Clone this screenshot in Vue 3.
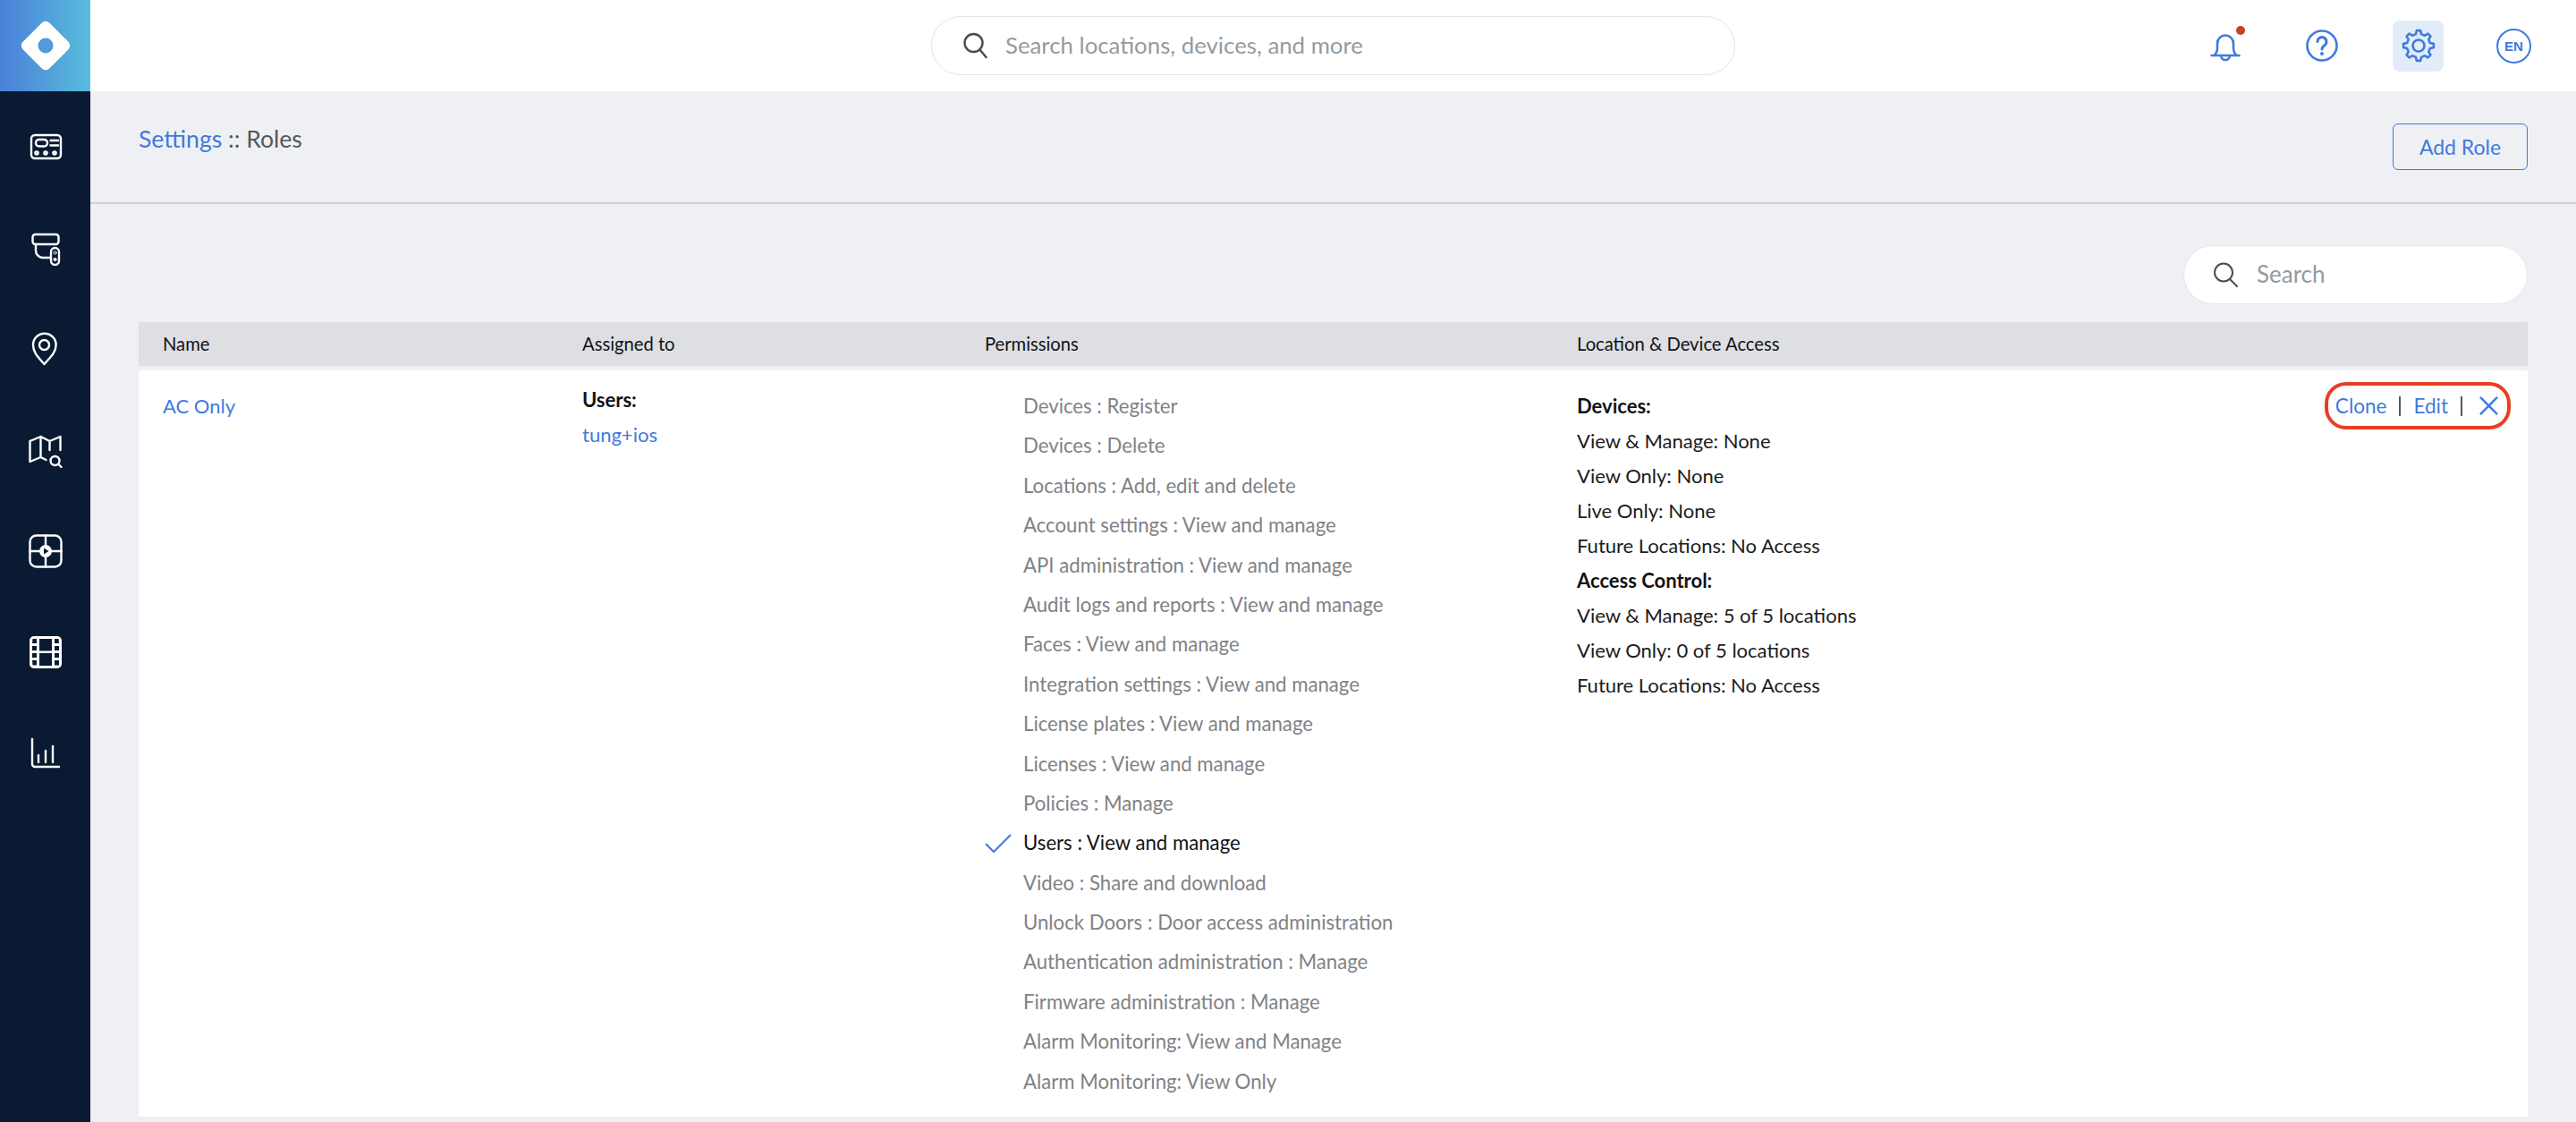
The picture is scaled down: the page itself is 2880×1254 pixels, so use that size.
<template>
  <div class="app">
    <aside class="sidebar">
      <div class="logo">
        <svg width="60" height="60" viewBox="0 0 60 60">
          <rect x="9" y="9" width="42" height="42" rx="6" fill="#fff" transform="rotate(45 30 30)" />
          <circle cx="30" cy="30" r="8.5" fill="#4f9bdc" />
        </svg>
      </div>
      <nav class="nav">
        <a class="nav-item">
          <svg class="nav-icon" viewBox="0 0 40 40">
            <rect x="4" y="7" width="33" height="26" rx="4" />
            <rect x="9" y="12" width="13" height="7.5" rx="3.5" />
            <path d="M25.5 13H34M25.5 18.5H34" />
            <circle cx="10" cy="27" r="1.6" />
            <circle cx="20" cy="27" r="1.6" />
            <circle cx="30" cy="27" r="1.6" />
          </svg>
        </a>
        <a class="nav-item">
          <svg class="nav-icon" viewBox="0 0 40 40">
            <rect x="5.500" y="5" width="29" height="11" rx="3" />
            <path d="M9 16v7a8 8 0 0 0 8 8h8" />
            <rect x="26" y="20" width="9" height="19" rx="4.500" fill="#0a1a33" />
            <circle cx="30.500" cy="25.500" r="1.600" stroke-width="1" />
            <circle cx="30.500" cy="33" r="1.600" fill="#fff" stroke-width="1" />
          </svg>
        </a>
        <a class="nav-item">
          <svg class="nav-icon" viewBox="0 0 40 40">
            <path d="M18.500 37C12 29.500 6 24 6 15.500a12.800 12.800 0 0 1 25.600 0C31.600 24 25 29.500 18.500 37z" />
            <circle cx="18.500" cy="15.500" r="5.500" />
          </svg>
        </a>
        <a class="nav-item">
          <svg class="nav-icon" viewBox="0 0 40 40">
            <path d="M2.500 10L14.500 5l10 5 12-5v15M2.500 10v23l12-5 6 3M14.500 5v23M24.500 10v10" />
            <circle cx="30.500" cy="32" r="5" />
            <path d="M34.500 36l3 3" />
          </svg>
        </a>
        <a class="nav-item">
          <svg class="nav-icon" viewBox="0 0 40 40">
            <rect x="2.500" y="2.500" width="35" height="35" rx="7" />
            <path d="M20 2.500v35M2.500 20h35" />
            <circle cx="20" cy="20" r="7" fill="#fff" stroke="none" />
            <path d="M18 16.500l5.500 3.500-5.500 3.500z" fill="#0a1a33" stroke="none" />
          </svg>
        </a>
        <a class="nav-item">
          <svg class="nav-icon" viewBox="0 0 40 40">
            <path fill-rule="evenodd" fill="#fff" stroke="none" d="M7 2h26a5 5 0 0 1 5 5v26a5 5 0 0 1-5 5H7a5 5 0 0 1-5-5V7a5 5 0 0 1 5-5zM5.500 5h4.500v5H5zM5 13h5v5H5zM5 21h5v5H5zM5 29h5v5.500H5.500zM13 5h14v13.500H13zM13 21h14v14H13zM30 5h4.500l.5 5h-5zM30 13h5v5h-5zM30 21h5v5h-5zM30 29h5v5.500h-5z" />
          </svg>
        </a>
        <a class="nav-item">
          <svg class="nav-icon" viewBox="0 0 40 40">
            <path d="M5 4v28a3 3 0 0 0 3 3h27" />
            <path d="M12 22v8M20 17v13M28 12v18" />
          </svg>
        </a>
      </nav>
    </aside>

    <main class="main">
      <header class="topbar">
        <div></div>
        <div class="global-search">
          <svg class="search-icon" viewBox="0 0 30 30">
            <circle cx="12.500" cy="12" r="10" />
            <path d="M19.500 19.500l7 8.500" />
          </svg>
          <span>Search locations, devices, and more</span>
        </div>
        <div class="top-icons">
          <button class="tile">
            <svg class="top-icon" viewBox="0 0 40 40">
              <path d="M4.500 31h31M7.500 31c2.500-2.500 3.500-5 3.500-8.500v-5a9 9 0 0 1 18 0v5c0 3.500 1 6 3.500 8.500" />
              <path d="M15 31a5 5 0 0 0 10 0" />
            </svg>
            <i class="dot"></i>
          </button>
          <button class="tile">
            <svg class="top-icon" viewBox="0 0 40 40">
              <circle cx="20" cy="20" r="16.500" />
              <path d="M15 15.500a5 5 0 1 1 7.800 4.200c-1.800 1.200-2.800 2-2.800 4.300" stroke-width="3" />
              <circle cx="20" cy="29" r="1" stroke-width="2" />
            </svg>
          </button>
          <button class="tile tile-active">
            <svg class="top-icon" viewBox="0 0 40 40">
              <path :d="gearPath" />
              <circle cx="20" cy="20" r="6.500" />
            </svg>
          </button>
          <button class="tile tile-lang">
            <span class="lang">EN</span>
          </button>
        </div>
      </header>

      <section class="page-head">
        <div class="crumbs"><a class="link">Settings</a> :: Roles</div>
        <button class="add-role">Add Role</button>
      </section>

      <section class="content">
        <div class="filter">
          <div class="filter-search">
            <svg class="filter-icon" viewBox="0 0 30 30">
              <circle cx="13" cy="12.500" r="10" />
              <path d="M20 20l8 8" />
            </svg>
            <span>Search</span>
          </div>
        </div>

        <div class="table-head">
          <div>Name</div>
          <div>Assigned to</div>
          <div>Permissions</div>
          <div>Location &amp; Device Access</div>
        </div>

        <div class="table-row">
          <div class="col-name"><a class="link">AC Only</a></div>
          <div class="col-assigned">
            <div class="strong">Users:</div>
            <a class="link">tung+ios</a>
          </div>
          <ul class="col-perms">
            <li v-for="perm in permissions" :key="perm.label" :class="{ granted: perm.granted }">
              <svg v-if="perm.granted" class="check" viewBox="0 0 30 22">
                <path d="M1 11l9 9L29 1" />
              </svg>
              {{ perm.label }}
            </li>
          </ul>
          <div class="col-access">
            <div class="access-list">
              <div v-for="line in access" :key="line.id" :class="{ strong: line.strong }">{{ line.text }}</div>
            </div>
            <div class="actions">
              <a class="link">Clone</a>
              <i class="sep"></i>
              <a class="link">Edit</a>
              <i class="sep"></i>
              <svg class="close" viewBox="0 0 22 22">
                <path d="M1 1l20 20M21 1L1 21" />
              </svg>
            </div>
          </div>
        </div>
      </section>
    </main>
  </div>
</template>

<script setup>
const permissions = [
  { label: 'Devices : Register' },
  { label: 'Devices : Delete' },
  { label: 'Locations : Add, edit and delete' },
  { label: 'Account settings : View and manage' },
  { label: 'API administration : View and manage' },
  { label: 'Audit logs and reports : View and manage' },
  { label: 'Faces : View and manage' },
  { label: 'Integration settings : View and manage' },
  { label: 'License plates : View and manage' },
  { label: 'Licenses : View and manage' },
  { label: 'Policies : Manage' },
  { label: 'Users : View and manage', granted: true },
  { label: 'Video : Share and download' },
  { label: 'Unlock Doors : Door access administration' },
  { label: 'Authentication administration : Manage' },
  { label: 'Firmware administration : Manage' },
  { label: 'Alarm Monitoring: View and Manage' },
  { label: 'Alarm Monitoring: View Only' }
];

const access = [
  { id: 1, text: 'Devices:', strong: true },
  { id: 2, text: 'View & Manage: None' },
  { id: 3, text: 'View Only: None' },
  { id: 4, text: 'Live Only: None' },
  { id: 5, text: 'Future Locations: No Access' },
  { id: 6, text: 'Access Control:', strong: true },
  { id: 7, text: 'View & Manage: 5 of 5 locations' },
  { id: 8, text: 'View Only: 0 of 5 locations' },
  { id: 9, text: 'Future Locations: No Access' }
];

// 8 tooth gear outline, centred in the 40x40 box
const gearPath = (() => {
  const teeth = 8;
  const outer = 17;
  const inner = 13.2;
  const pts = [];
  for (let i = 0; i < teeth; i++) {
    const a = (i / teeth) * Math.PI * 2 - Math.PI / 2;
    const step = (Math.PI * 2) / teeth;
    pts.push([inner, a - step * 0.3], [outer, a - step * 0.16], [outer, a + step * 0.16], [inner, a + step * 0.3]);
  }
  return 'M' + pts.map(([r, a]) => `${(20 + r * Math.cos(a)).toFixed(2)} ${(20 + r * Math.sin(a)).toFixed(2)}`).join('L') + 'z';
})();
</script>

<style>
html,
body {
  margin: 0;
  background: #eff0f4;
}
</style>

<style scoped>
.app {
  display: flex;
  width: 2880px;
  height: 1254px;
  overflow: hidden;
  background: #eff0f4;
  font-family: "Lato", "Noto Sans", sans-serif;
  font-size: 22px;
  color: #1a1c20;
}

.sidebar {
  width: 101px;
  flex-shrink: 0;
  background: #0a1a33;
}

.logo {
  height: 102px;
  display: flex;
  align-items: center;
  justify-content: center;
  background: linear-gradient(90deg, #4a80d8, #58bcdc);
}

.nav {
  padding-top: 5px;
}

.nav-item {
  display: flex;
  height: 113px;
  align-items: center;
  justify-content: center;
}

.nav-icon {
  width: 40px;
  height: 40px;
  fill: none;
  stroke: #fff;
  stroke-width: 2.4;
  stroke-linecap: round;
  stroke-linejoin: round;
}

.main {
  flex: 1;
  min-width: 0;
  display: flex;
  flex-direction: column;
}

.topbar {
  height: 102px;
  flex-shrink: 0;
  display: grid;
  grid-template-columns: 1fr 899px 1fr;
  align-items: center;
  background: #fff;
}

.global-search {
  height: 66px;
  box-sizing: border-box;
  display: flex;
  align-items: center;
  gap: 18px;
  padding-left: 34px;
  padding-bottom: 1px;
  border: 1.5px solid #e3e4e8;
  border-radius: 33px;
  color: #97999d;
  font-size: 25.8px;
}

.global-search span {
  margin-top: -2px;
}

.search-icon {
  width: 30px;
  height: 30px;
  fill: none;
  stroke: #4a4c50;
  stroke-width: 2.4;
  stroke-linecap: round;
}

.top-icons {
  display: flex;
  justify-content: flex-end;
  align-items: center;
  gap: 51px;
  padding-right: 41px;
}

.tile {
  position: relative;
  width: 57px;
  height: 57px;
  padding: 0;
  display: flex;
  align-items: center;
  justify-content: center;
  background: none;
  border: none;
  border-radius: 8px;
}

.tile-active {
  background: #e2ecf8;
}

.tile-lang {
  margin-left: -1px;
}

.top-icon {
  width: 40px;
  height: 40px;
  fill: none;
  stroke: #3f7ade;
  stroke-width: 2.6;
  stroke-linecap: round;
  stroke-linejoin: round;
}

.dot {
  position: absolute;
  top: 6px;
  right: 6px;
  width: 10px;
  height: 10px;
  border-radius: 50%;
  background: #c8402a;
}

.lang {
  width: 39px;
  height: 39px;
  box-sizing: border-box;
  display: flex;
  align-items: center;
  justify-content: center;
  border: 2px solid #3f7ade;
  border-radius: 50%;
  color: #3f7ade;
  font-size: 15px;
  font-weight: 700;
}

.page-head {
  height: 126px;
  flex-shrink: 0;
  box-sizing: border-box;
  display: flex;
  justify-content: space-between;
  align-items: flex-start;
  padding: 36px 54px 0;
  border-bottom: 2px solid #cfd1d6;
}

.crumbs {
  margin-top: 1px;
  line-height: 32px;
  font-size: 26.6px;
  color: #55575b;
}

.link {
  color: #3f7ade;
}

.add-role {
  width: 151px;
  height: 52px;
  padding: 0;
  border: 1.5px solid #3f7ade;
  border-radius: 6px;
  background: transparent;
  color: #3f7ade;
  font-family: inherit;
  font-size: 23px;
}

.content {
  padding: 46px 54px 0;
}

.filter {
  display: flex;
  justify-content: flex-end;
  margin-bottom: 20px;
}

.filter-search {
  width: 385px;
  height: 66px;
  box-sizing: border-box;
  display: flex;
  align-items: center;
  padding-left: 31px;
  gap: 20px;
  border: 1px solid #e6e7ea;
  border-radius: 33px;
  background: #fff;
  color: #97999d;
  font-size: 26px;
}

.filter-search span {
  margin-top: -2px;
}

.filter-icon {
  width: 30px;
  height: 30px;
  fill: none;
  stroke: #4a4c50;
  stroke-width: 2;
  stroke-linecap: round;
}

.table-head,
.table-row {
  display: grid;
  grid-template-columns: 469px 450px 662px 1fr;
  padding-left: 27px;
}

.table-head {
  height: 49px;
  padding-bottom: 2px;
  box-sizing: border-box;
  align-items: center;
  background: #dedfe3;
  font-size: 20.2px;
  color: #111316;
}

.table-row {
  height: 834px;
  margin-top: 5px;
  background: #fff;
  line-height: 39px;
}

.col-name {
  padding-top: 20px;
}

.col-assigned {
  padding-top: 13px;
}

.strong {
  font-weight: 700;
  color: #111316;
}

.col-perms {
  margin: 0;
  padding: 18px 0 0 43px;
  list-style: none;
  color: #808286;
  font-size: 22.2px;
}

.col-perms li {
  position: relative;
  height: 44.4px;
  line-height: 44.4px;
}

.col-perms li.granted {
  color: #111316;
}

.check {
  position: absolute;
  left: -43px;
  top: 12px;
  width: 30px;
  height: 22px;
  fill: none;
  stroke: #3f7ade;
  stroke-width: 2;
}

.col-access {
  display: flex;
  justify-content: space-between;
  align-items: flex-start;
  padding-right: 19px;
}

.access-list {
  padding-top: 20px;
}

.actions {
  margin-top: 13px;
  height: 53px;
  box-sizing: border-box;
  display: flex;
  align-items: center;
  padding: 0 10px 0 8px;
  border: 4px solid #e83e22;
  border-radius: 24px;
  font-size: 22.5px;
}

.sep {
  width: 2px;
  height: 22px;
  margin: 0 14px;
  background: #55575b;
}

.close {
  width: 21px;
  height: 21px;
  margin-left: 5px;
  fill: none;
  stroke: #3f7ade;
  stroke-width: 2.6;
}
</style>
